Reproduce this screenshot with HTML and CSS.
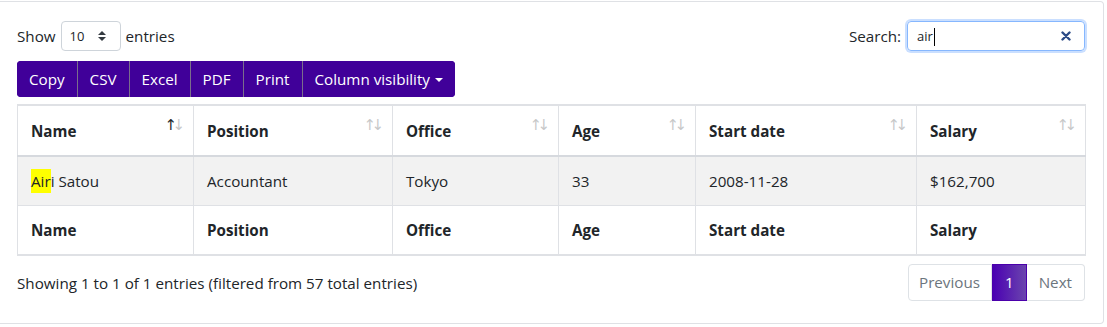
FILE: index.html
```html
<!DOCTYPE html>
<html lang="en">
  <head>
    <meta charset="UTF-8" />
    <title>Employees</title>
    <link rel="stylesheet" href="styles.css">
  </head>
  <body>
    <div class="card">
      <div class="dt-top">
        <label class="dt-length">
          Show
          <span class="select">
            <span class="select-value">10</span>
            <svg class="select-arrows" width="10" height="12" viewBox="0 0 10 12">
              <path d="M1 5 L5 1 L9 5 Z M1 7 L5 11 L9 7 Z" fill="#343a40" />
            </svg>
          </span>
          entries
        </label>
        <label class="dt-search">
          Search:
          <span class="search-box">
            <span class="search-text">air<span class="caret"></span></span>
            <svg class="search-clear" width="10" height="10" viewBox="0 0 10 10">
              <path d="M1.5 1.5 L8.5 8.5 M8.5 1.5 L1.5 8.5" stroke="#2b4a86" stroke-width="2.4" stroke-linecap="round" />
            </svg>
          </span>
        </label>
      </div>

      <div class="dt-buttons">
        <button class="btn">Copy</button>
        <button class="btn">CSV</button>
        <button class="btn">Excel</button>
        <button class="btn">PDF</button>
        <button class="btn">Print</button>
        <button class="btn">Column visibility<span class="dropdown-caret"></span></button>
      </div>

      <table class="table">
        <colgroup>
          <col style="width: 176px" />
          <col style="width: 199px" />
          <col style="width: 166px" />
          <col style="width: 137px" />
          <col style="width: 221px" />
          <col style="width: 169px" />
        </colgroup>
        <thead>
          <tr>
            <th class="sorting sorted">Name</th>
            <th class="sorting">Position</th>
            <th class="sorting">Office</th>
            <th class="sorting">Age</th>
            <th class="sorting">Start date</th>
            <th class="sorting">Salary</th>
          </tr>
        </thead>
        <tbody>
          <tr class="odd">
            <td><mark>Air</mark>i Satou</td>
            <td>Accountant</td>
            <td>Tokyo</td>
            <td>33</td>
            <td>2008-11-28</td>
            <td>$162,700</td>
          </tr>
        </tbody>
        <tfoot>
          <tr>
            <th>Name</th>
            <th>Position</th>
            <th>Office</th>
            <th>Age</th>
            <th>Start date</th>
            <th>Salary</th>
          </tr>
        </tfoot>
      </table>

      <div class="dt-bottom">
        <div class="dt-info">Showing 1 to 1 of 1 entries (filtered from 57 total entries)</div>
        <ul class="pagination">
          <li class="page-item disabled"><a href="#">Previous</a></li>
          <li class="page-item active"><a href="#">1</a></li>
          <li class="page-item disabled"><a href="#">Next</a></li>
        </ul>
      </div>
    </div>
  </body>
</html>
```

FILE: styles.css
```css
/* reset */
body,
ul,
li {
  margin: 0;
  padding: 0;
}

li {
  list-style-type: none;
}

a {
  text-decoration: none;
}

body {
  font-family: "Open Sans", "Noto Sans", sans-serif;
  font-size: 15.2px;
  color: #212529;
  background-color: #fff;
}

.card {
  margin-top: 1px;
  width: 1104px;
  height: 323px;
  box-sizing: border-box;
  border: 1px solid #dfe1e5;
  border-left: 0;
  border-radius: 0 4px 4px 0;
  padding: 19px 18px 0 17px;
}

/* top bar */
.dt-top {
  display: flex;
  justify-content: space-between;
  align-items: center;
  height: 30px;
}

.dt-length,
.dt-search {
  display: flex;
  align-items: center;
}

.select {
  display: flex;
  align-items: center;
  justify-content: space-between;
  box-sizing: border-box;
  width: 60px;
  height: 30px;
  margin: 0 5px;
  padding: 0 13px 0 8px;
  border: 1px solid #ced4da;
  border-radius: 4px;
  font-size: 13px;
}

.search-box {
  display: flex;
  align-items: center;
  justify-content: space-between;
  box-sizing: border-box;
  width: 178px;
  height: 30px;
  margin-left: 6px;
  padding: 0 13px 0 9px;
  border: 1px solid #86b7fe;
  border-radius: 4px;
  box-shadow: 0 0 0 2px rgba(13, 110, 253, 0.22);
  font-size: 13px;
}

.caret {
  display: inline-block;
  width: 1px;
  height: 18px;
  margin-left: 1px;
  vertical-align: -5px;
  background-color: #000;
}

/* buttons */
.dt-buttons {
  display: flex;
  width: max-content;
  margin-top: 10px;
  border-radius: 4px;
  overflow: hidden;
  background-color: #400099;
}

.btn {
  height: 36px;
  padding: 0 12px;
  border: 0;
  border-left: 1px solid #7a6d8c;
  background-color: #400099;
  color: #fff;
  font-family: inherit;
  font-size: 15.2px;
}

.btn:first-child {
  border-left: 0;
}

.dropdown-caret {
  display: inline-block;
  margin-left: 5px;
  vertical-align: 3px;
  border-top: 4px solid #fff;
  border-left: 4px solid transparent;
  border-right: 4px solid transparent;
}

/* table */
.table {
  width: 1068px;
  margin-top: 7px;
  table-layout: fixed;
  border-collapse: collapse;
  border: 1px solid #dfe1e5;
  border-top-width: 2px;
  border-bottom-width: 2px;
}

.table th,
.table td {
  padding: 0 13px;
  border: 1px solid #dfe1e5;
  text-align: left;
}

.table th {
  font-weight: 700;
}

.table thead th {
  height: 49px;
  border-bottom: 2px solid #d6d9de;
}

.table tbody td {
  height: 48px;
}

.table tfoot th {
  height: 48px;
}

.odd td {
  background-color: #f2f2f2;
}

mark {
  padding: 2px 0;
  background-color: #ffff00;
  color: inherit;
}

.sorting {
  position: relative;
}

.sorting::before,
.sorting::after {
  position: absolute;
  top: 10px;
  font-family: "DejaVu Sans", sans-serif;
  font-size: 15px;
  font-weight: 400;
  opacity: 0.25;
}

.sorting::before {
  content: "↑";
  right: 16px;
}

.sorting::after {
  content: "↓";
  right: 8px;
}

.sorted::before {
  opacity: 1;
}

/* bottom */
.dt-bottom {
  display: flex;
  justify-content: space-between;
  align-items: center;
  margin-top: 8px;
}

.pagination {
  display: flex;
}

.page-item a {
  display: block;
  height: 35px;
  line-height: 35px;
  padding: 0 12px;
  border: 1px solid #dee2e6;
  color: #6c757d;
}

.page-item:first-child a {
  padding: 0 11px 0 10px;
  border-radius: 4px 0 0 4px;
}

.page-item:last-child a {
  border-radius: 0 4px 4px 0;
  border-left: 0;
}

.page-item.active a {
  border-color: #4b00ab;
  background: linear-gradient(to right, #4a00b2, #6b45ae);
  color: #fff;
}
```
